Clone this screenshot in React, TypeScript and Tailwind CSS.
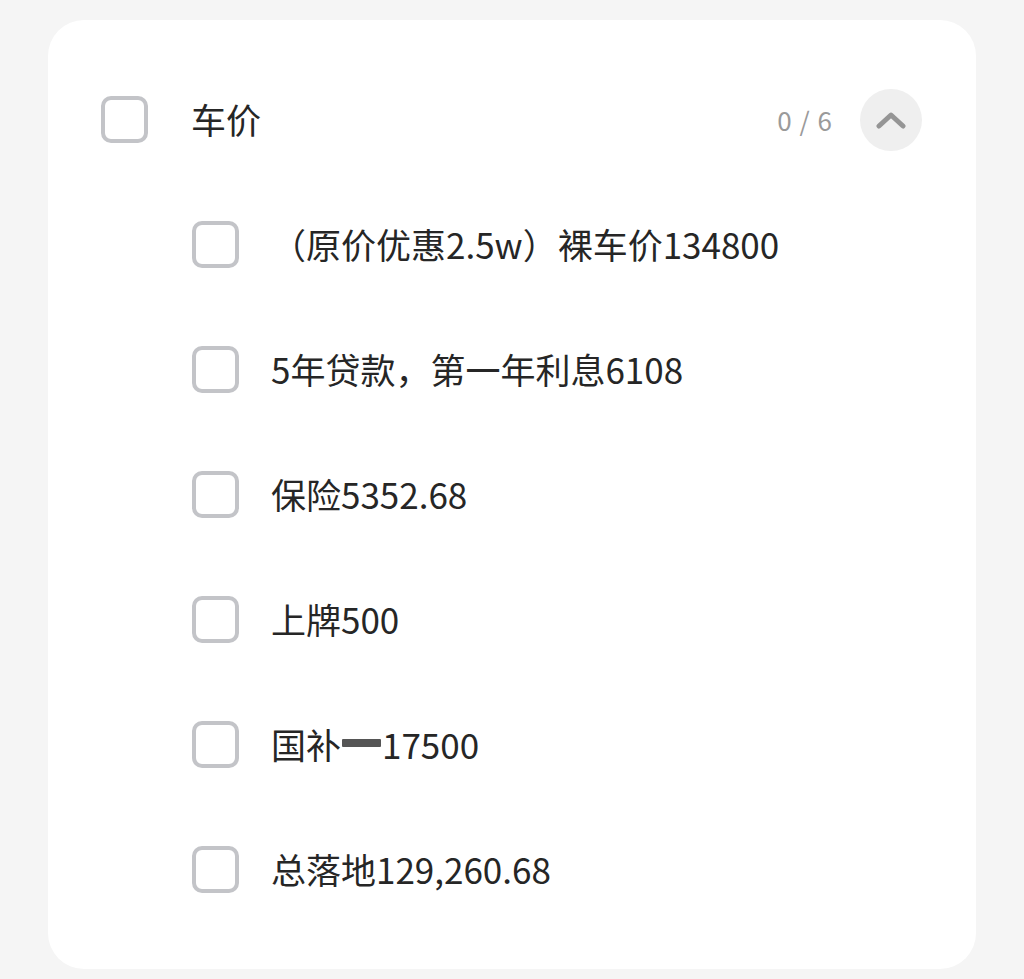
const items = [
  "（原价优惠2.5w）裸车价134800",
  "5年贷款，第一年利息6108",
  "保险5352.68",
  "上牌500",
  "国补",
  "总落地129,260.68",
];

const Box = () => (
  <div className="w-[47px] h-[47px] shrink-0 rounded-[10px] border-4 border-[#c3c4c8] bg-white" />
);

export default function App() {
  return (
    <div
      className="min-h-[979px] bg-[#f5f5f5] pt-5 px-12"
      style={{ fontFamily: '"Noto Sans CJK SC", "Noto Sans", sans-serif' }}
    >
      <div className="bg-white rounded-[36px] pt-[37px] pb-[37px] pl-[53px] pr-[54px]">
        <div className="h-[125px] flex items-center">
          <Box />
          <span className="ml-[43px] pb-[3px] text-[35px] text-[#262626] leading-none">车价</span>
          <span className="ml-auto text-[26px] text-[#9a9a9a] tracking-[1px]">0 / 6</span>
          <button className="ml-[27px] w-[62px] h-[62px] rounded-full bg-[#efefef] flex items-center justify-center">
            <svg width="30" height="18" viewBox="0 0 30 18" fill="none">
              <polyline
                points="3,15 15,4 27,15"
                stroke="#959595"
                strokeWidth="5"
                strokeLinecap="round"
                strokeLinejoin="round"
              />
            </svg>
          </button>
        </div>
        {items.map((t, i) => (
          <div key={i} className="h-[125px] flex items-center pl-[91px]">
            <Box />
            <span className="ml-[32px] pb-[3px] text-[35px] text-[#262626] leading-none whitespace-nowrap flex items-center">
              {t}
              {t === "国补" && (
                <>
                  <span className="inline-block w-[39px] h-[8px] bg-[#555] rounded-[1px] mx-[1px]" />
                  17500
                </>
              )}
            </span>
          </div>
        ))}
      </div>
    </div>
  );
}
